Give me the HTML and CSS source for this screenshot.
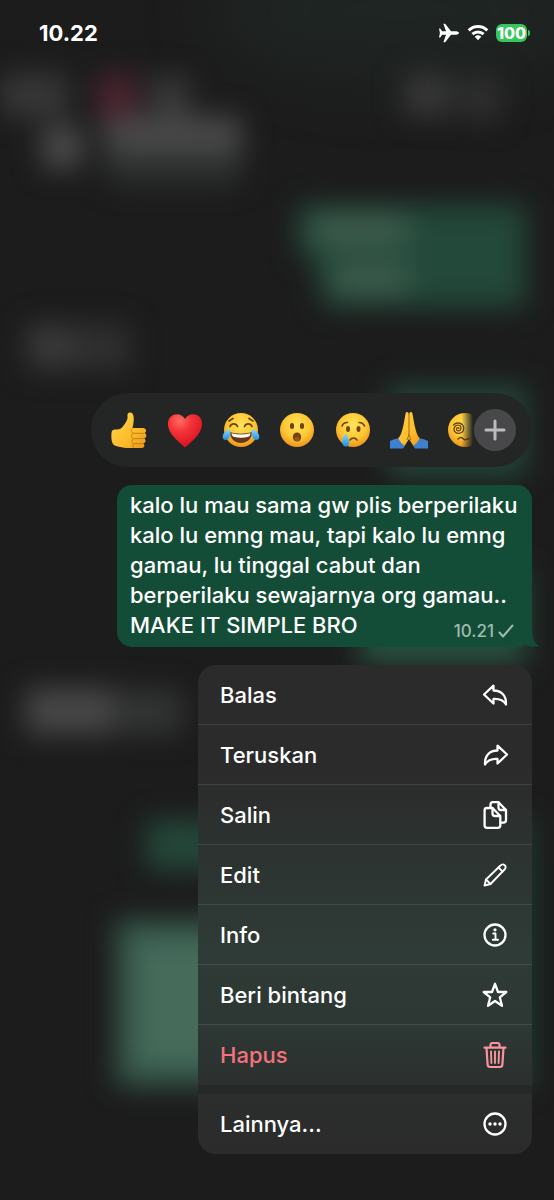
FILE: index.html
```html
<!DOCTYPE html>
<html lang="id">
<head>
    <meta charset="UTF-8">
    <meta name="viewport" content="width=device-width, initial-scale=1.0">
    <title>Chat</title>
    <link rel="stylesheet" href="styles.css">
</head>
<body>

    <!-- Blurred chat behind the menu -->
    <svg class="backdrop" viewBox="0 0 554 1200" preserveAspectRatio="none" aria-hidden="true">
        <defs>
            <filter id="blur" x="-50%" y="-50%" width="200%" height="200%" color-interpolation-filters="sRGB">
                <feGaussianBlur stdDeviation="14"/>
            </filter>
            <filter id="glow" x="-50%" y="-100%" width="200%" height="300%" color-interpolation-filters="sRGB">
                <feGaussianBlur stdDeviation="30"/>
            </filter>
        </defs>
        <rect width="554" height="1200" fill="#1c1c1c"/>
        <ellipse cx="400" cy="10" rx="190" ry="70" fill="#1f2523" filter="url(#glow)"/>
        <g filter="url(#blur)">
            <rect x="0" y="74" width="68" height="42" fill="#383838"/>
            <rect x="98" y="74" width="38" height="48" fill="#4e2330"/>
            <rect x="150" y="76" width="40" height="50" fill="#393939"/>
            <rect x="42" y="126" width="40" height="42" fill="#4c4c4c"/>
            <rect x="104" y="116" width="138" height="40" fill="#494949"/>
            <rect x="108" y="154" width="132" height="30" fill="#2d302f"/>
            <rect x="404" y="74" width="46" height="42" fill="#383838"/>
            <rect x="460" y="76" width="42" height="44" fill="#2f2f2f"/>
            <rect x="26" y="324" width="104" height="46" fill="#303030"/>
            <rect x="30" y="326" width="40" height="38" fill="#3b3b3b"/>
        </g>
        <g filter="url(#blur)">
            <path d="M298 205H526V307H324L314 256H298Z" fill="#23493a"/>
            <rect x="312" y="214" width="96" height="32" fill="#3e5c4d"/>
            <rect x="332" y="264" width="76" height="30" fill="#3e5c4d"/>
            <rect x="388" y="386" width="138" height="90" fill="#24483a"/>
            <rect x="360" y="570" width="166" height="96" fill="#28503f"/>
        </g>
        <g filter="url(#blur)">
            <rect x="26" y="688" width="90" height="46" fill="#484848"/>
            <rect x="112" y="690" width="70" height="44" fill="#333434"/>
            <rect x="146" y="820" width="384" height="50" fill="#24483a"/>
            <rect x="116" y="920" width="412" height="166" fill="#36594b"/>
            <rect x="136" y="940" width="300" height="124" fill="#466b5b"/>
            <rect x="500" y="840" width="34" height="230" fill="#1c382e"/>
        </g>
    </svg>

    <!-- Shared emoji gradients -->
    <svg class="defs" aria-hidden="true">
        <defs>
            <radialGradient id="face" cx="50%" cy="36%" r="66%">
                <stop offset="0" stop-color="#ffe45c"/>
                <stop offset="0.6" stop-color="#fdc732"/>
                <stop offset="1" stop-color="#ee8f1d"/>
            </radialGradient>
            <linearGradient id="skin" x1="0" y1="0" x2="1" y2="1">
                <stop offset="0" stop-color="#ffd54d"/>
                <stop offset="0.6" stop-color="#fdbd2c"/>
                <stop offset="1" stop-color="#e8951b"/>
            </linearGradient>
            <radialGradient id="red" cx="35%" cy="20%" r="80%">
                <stop offset="0" stop-color="#ff6f63"/>
                <stop offset="0.4" stop-color="#f5343a"/>
                <stop offset="1" stop-color="#d9121f"/>
            </radialGradient>
            <linearGradient id="tear" x1="0" y1="0" x2="0" y2="1">
                <stop offset="0" stop-color="#8fdcfb"/>
                <stop offset="1" stop-color="#1f92e0"/>
            </linearGradient>
        </defs>
    </svg>

    <div class="screen">
        <header class="status-bar">
            <time class="clock">10.22</time>
            <div class="status-icons">
                <svg width="22" height="20" viewBox="0 0 22 20" fill="#fff">
                    <path d="M21 10C21 8.800 19 8.200 17 8.200H13L7.600 1.200C7.300 .8 6.900 .7 6.500 .7H5.400L8 8.200H4.200L2.200 5.500H1L1.900 10L1 14.500H2.200L4.200 11.800H8L5.400 19.300H6.500C6.900 19.300 7.300 19.200 7.600 18.800L13 11.800H17C19 11.800 21 11.200 21 10Z"/>
                </svg>
                <svg width="22" height="18" viewBox="0 0 22 18" fill="none" stroke="#fff" stroke-width="3">
                    <path d="M1.700 6.300C7 1.200 15 1.200 20.300 6.300"/>
                    <path d="M5.400 10.200C8.600 7.100 13.400 7.100 16.600 10.200"/>
                    <path d="M11 11.300C12.400 11.300 13.400 11.900 14.200 12.700L11 16.200L7.800 12.700C8.600 11.900 9.600 11.300 11 11.300Z" fill="#fff" stroke="none"/>
                </svg>
                <div class="battery"><span class="battery-level">100</span></div>
            </div>
        </header>

        <main class="focus">
            <div class="reactions">
                <button class="emoji" aria-label="Suka">
                    <svg viewBox="0 0 36 36">
                        <path d="M1 19C0 21 0 29 2 32C4 35 11 35 15 36H31C34 36 34 32 32 31.500C35 31 35.500 27.500 33 26.500C36 26 36 22 33.500 21C36 20 35.500 16 32 16H21.500C22.500 12 23.500 6 22 2.500C20.500-.6 16 0 16.500 3.500C17 8 15 10 13 13C11 16 9 17.500 6 17.500C3 17.500 1.700 17.500 1 19Z" fill="url(#skin)"/>
                        <path d="M22 21.300H33M22 26.600H33M22 31.600H32M21.500 16.500C19.500 18 20 21 22.500 21.300C20 22 20 26 22.500 26.500C20.500 27.500 20.500 31 22.800 31.600C21 32.500 21.500 35 23 35.700" fill="none" stroke="#c97f16" stroke-width="1"/>
                    </svg>
                </button>
                <button class="emoji" aria-label="Cinta">
                    <svg viewBox="0 0 36 36">
                        <path d="M18 7C15 1 6 .5 2.500 6C-1 12 2 19 6 24C10 29 15 32.500 18 35.500C21 32.500 26 29 30 24C34 19 37 12 33.500 6C30 .5 21 1 18 7Z" fill="url(#red)"/>
                    </svg>
                </button>
                <button class="emoji" aria-label="Tertawa">
                    <svg viewBox="0 0 36 36">
                        <circle cx="18" cy="18" r="17" fill="url(#face)"/>
                        <path d="M7 14.500C8.500 11 13 11 14.500 14.500M21.500 14.500C23 11 27.500 11 29 14.500M6 9L10 6.500M30 9L26 6.500" fill="none" stroke="#71430f" stroke-width="1.800" stroke-linecap="round"/>
                        <path d="M7 20C14 22.300 22 22.300 29 20C29 27 24 31 18 31C12 31 7 27 7 20Z" fill="#66391a"/>
                        <path d="M8.500 21.200C15 23 21 23 27.500 21.200C27 24 26 24.500 25.500 24.700C20.500 26 15.500 26 10.500 24.700C9 24 8.700 22.500 8.500 21.200Z" fill="#fff"/>
                        <path d="M7 17C3 18-1 22-.2 26C.6 28.500 4 28.800 6 26C7.500 23.500 7.800 20 7 17ZM29 17C33 18 37 22 36.200 26C35.400 28.500 32 28.800 30 26C28.500 23.500 28.200 20 29 17Z" fill="url(#tear)"/>
                    </svg>
                </button>
                <button class="emoji" aria-label="Kaget">
                    <svg viewBox="0 0 36 36">
                        <circle cx="18" cy="18" r="17" fill="url(#face)"/>
                        <ellipse cx="13" cy="14" rx="2.100" ry="3" fill="#71430f"/>
                        <ellipse cx="23" cy="14" rx="2.100" ry="3" fill="#71430f"/>
                        <ellipse cx="18" cy="25" rx="4.200" ry="4.600" fill="#71430f"/>
                        <ellipse cx="18" cy="27" rx="2.600" ry="2.200" fill="#97571d"/>
                    </svg>
                </button>
                <button class="emoji" aria-label="Sedih">
                    <svg viewBox="0 0 36 36">
                        <circle cx="18" cy="18" r="17" fill="url(#face)"/>
                        <ellipse cx="13" cy="17" rx="2" ry="2.900" fill="#71430f"/>
                        <ellipse cx="23.500" cy="17" rx="2" ry="2.900" fill="#71430f"/>
                        <path d="M7 14C8 11.500 10 10.300 12.500 10.500M24 10.500C26.500 10.500 28.500 11.500 29.500 14M15 28C16.500 25.500 20.500 25.500 22 28" fill="none" stroke="#71430f" stroke-width="1.600" stroke-linecap="round"/>
                        <path d="M11 21C9.500 23.500 7 26.500 7 29.500C7 32.500 8.800 34.500 11 34.500C13.200 34.500 14.500 32.500 14.200 29.500C13.800 26.500 12 24 11 21Z" fill="url(#tear)"/>
                    </svg>
                </button>
                <button class="emoji" aria-label="Doa">
                    <svg viewBox="0 0 36 36">
                        <path d="M17.500 1C16.500-1 14.500 0 14.500 2L12.500 13C11.500 17 11 20 9 24L6 28L12.500 35.500L18 27V3ZM18.500 1C19.500-1 21.500 0 21.500 2L23.500 13C24.500 17 25 20 27 24L30 28L23.500 35.500L18 27V3Z" fill="url(#skin)"/>
                        <path d="M18 2V21C18 24 17 26 16 28M18 21C18 24 19 26 20 28" fill="none" stroke="#b87416" stroke-width="1.200"/>
                        <path d="M-1 29C2 27.500 4.500 26.800 7.500 26.500C9 30 11 32 13.500 33.500L12 36.500H-1ZM37 29C34 27.500 31.500 26.800 28.500 26.500C27 30 25 32 22.500 33.500L24 36.500H37Z" fill="#3f7fcf"/>
                    </svg>
                </button>
                <button class="emoji emoji-faded" aria-label="Pusing">
                    <svg viewBox="0 0 36 36">
                        <circle cx="18" cy="18" r="17" fill="url(#face)"/>
                        <path d="M12 16.500C11.500 15 9.500 15.500 9.500 17C9.500 19.500 13.500 19.500 14 16.500C14.500 13 10 12 8 14.500C5.500 18 8 21.500 12 21.300C16 21 18 17 16 13.500C14 10.500 9 10 6.500 13" fill="none" stroke="#71430f" stroke-width="1.300" stroke-linecap="round"/>
                        <path d="M11 27C13 24.500 15 25.500 16.500 27C18.500 29 20 27 22 26.500" fill="none" stroke="#71430f" stroke-width="1.500" stroke-linecap="round"/>
                    </svg>
                </button>
                <button class="add-reaction" aria-label="Reaksi lainnya">
                    <svg width="22" height="22" viewBox="0 0 22 22" stroke="#bcbcbf" stroke-width="3" stroke-linecap="round">
                        <path d="M11 2V20M2 11H20"/>
                    </svg>
                </button>
            </div>

            <article class="bubble">
                <p class="bubble-text">kalo lu mau sama gw plis berperilaku<br>kalo lu emng mau, tapi kalo lu emng<br>gamau, lu tinggal cabut dan<br>berperilaku sewajarnya org gamau..<br>MAKE IT SIMPLE BRO</p>
                <div class="bubble-meta">
                    <time>10.21</time>
                    <svg width="16" height="14" viewBox="0 0 16 14" fill="none" stroke="#9dbbae" stroke-width="2" stroke-linecap="round" stroke-linejoin="round">
                        <path d="M1.500 8.500L5 12.500L14.500 1.500"/>
                    </svg>
                </div>
                <svg class="bubble-tail" width="20" height="18" viewBox="0 0 20 18" fill="#144d37">
                    <path d="M13 0C13 8 15 14 20 17C14 18.500 8 17.500 4 14L0 6Z"/>
                </svg>
            </article>

            <nav class="menu">
                <button class="menu-item">
                    Balas
                    <svg class="icon" viewBox="0 0 28 28">
                        <path d="M3 13.500L12.500 4.700V9.500C20 9.500 25.500 14 25 23.500C22.500 19.500 19 17.500 12.500 18V22.500Z"/>
                    </svg>
                </button>
                <button class="menu-item">
                    Teruskan
                    <svg class="icon" viewBox="0 0 28 28">
                        <path d="M26 13.500L16.500 4.700V9.500C9 9.500 3.500 14 4 23.500C6.500 19.500 10 17.500 16.500 18V22.500Z"/>
                    </svg>
                </button>
                <button class="menu-item">
                    Salin
                    <svg class="icon" viewBox="0 0 28 28">
                        <path d="M9.500 6.500V3.800C9.500 1.900 10.400 1.200 12 1.200H17.500L25 9V19C25 21 24 21.600 22.500 21.600H19.500"/>
                        <path d="M17.500 1.500V6.500C17.500 8 18.300 9 19.700 9H25"/>
                        <path d="M6 7H11.500L19.300 15V24.500C19.300 26.100 18.400 26.800 16.800 26.800H6C4.400 26.800 3.600 26.100 3.600 24.500V9.300C3.600 7.700 4.400 7 6 7Z"/>
                        <path d="M11.500 7.200V12.500C11.500 14.200 12.300 15 14 15H19"/>
                    </svg>
                </button>
                <button class="menu-item">
                    Edit
                    <svg class="icon icon-thin" viewBox="0 0 28 28">
                        <path d="M3.500 24.500L5 18.500L19.500 4.500C21 3 22.500 3 23.700 4.300C25 5.500 25 7 23.500 8.500L9.500 23Z"/>
                        <path d="M17.500 6.500L21.500 10.500M5 18.500L9.500 23"/>
                    </svg>
                </button>
                <button class="menu-item">
                    Info
                    <svg class="icon" viewBox="0 0 28 28">
                        <circle cx="14" cy="14" r="10.500"/>
                        <path class="thin" d="M12.200 12.500H14.500V18.500M11.800 18.800H17"/>
                        <circle class="dot" cx="14" cy="8.800" r="1.600"/>
                    </svg>
                </button>
                <button class="menu-item">
                    Beri bintang
                    <svg class="icon" viewBox="0 0 28 28">
                        <path d="M14 2.800L17 11H25.300L18.800 16.300L21 24.800L14 20L7 24.800L9.200 16.300L2.700 11H11Z"/>
                    </svg>
                </button>
                <button class="menu-item menu-item-danger">
                    Hapus
                    <svg class="icon" viewBox="0 0 28 28">
                        <path d="M3.500 6.700H24.500M9.500 6.500V4C9.500 2.500 10 2 11.500 2H16.500C18 2 18.500 2.500 18.500 4V6.500M5.500 7L6.600 23.500C6.700 25.200 7.500 26 9 26H19C20.500 26 21.300 25.200 21.400 23.500L22.500 7"/>
                        <path class="thin" d="M10 10.500L10.400 22M14 10.500V22M18 10.500L17.600 22"/>
                    </svg>
                </button>
                <button class="menu-item menu-item-more">
                    Lainnya...
                    <svg class="icon" viewBox="0 0 28 28">
                        <circle cx="14" cy="14" r="10.500"/>
                        <circle class="dot" cx="9" cy="14" r="1.700"/>
                        <circle class="dot" cx="14" cy="14" r="1.700"/>
                        <circle class="dot" cx="19" cy="14" r="1.700"/>
                    </svg>
                </button>
            </nav>
        </main>
    </div>

</body>
</html>
```
FILE: styles.css
```css
* {
    margin: 0;
    padding: 0;
    box-sizing: border-box;
}

body {
    font-family: Inter, "Liberation Sans", sans-serif;
    background: #1c1c1c;
    color: #fff;
}

button {
    border: none;
    background: none;
    color: inherit;
    font: inherit;
    cursor: pointer;
}

svg {
    display: block;
}

.defs {
    position: absolute;
    width: 0;
    height: 0;
}

/* Blurred chat, lies under everything */
.backdrop {
    position: absolute;
    top: 0;
    left: 0;
    width: 100%;
    height: 100%;
    z-index: -1;
}

.screen {
    min-height: 100vh;
    display: flex;
    flex-direction: column;
}

/* Status bar */
.status-bar {
    display: flex;
    justify-content: space-between;
    align-items: center;
    height: 66px;
    padding: 0 24px 0 39px;
}

.clock {
    font-size: 22px;
    font-weight: 700;
}

.status-icons {
    display: flex;
    align-items: center;
    gap: 7px;
}

.battery {
    display: flex;
    align-items: center;
    gap: 1px;
}

.battery::after {
    content: "";
    width: 2px;
    height: 6px;
    border-radius: 0 2px 2px 0;
    background: #34c759;
}

.battery-level {
    width: 31px;
    border-radius: 6px;
    background: #34c759;
    font-size: 16px;
    font-weight: 800;
    line-height: 18px;
    text-align: center;
}

/* Focused message */
.focus {
    flex: 1;
    display: flex;
    flex-direction: column;
    justify-content: flex-end;
    align-items: flex-end;
    gap: 18px;
    padding: 0 22px 46px;
}

.reactions {
    position: relative;
    display: flex;
    align-items: center;
    gap: 20px;
    width: 441px;
    max-width: 100%;
    height: 74px;
    padding-left: 20px;
    border-radius: 37px;
    background: #242626;
    overflow: hidden;
}

.emoji {
    flex: none;
    width: 36px;
    height: 36px;
}

.emoji svg {
    width: 36px;
    height: 36px;
    overflow: visible;
}

.emoji-faded {
    mask-image: linear-gradient(to right, #000 40%, transparent 72%);
}

.add-reaction {
    position: absolute;
    top: 16px;
    right: 16px;
    display: flex;
    justify-content: center;
    align-items: center;
    width: 42px;
    height: 42px;
    border-radius: 50%;
    background: #48484a;
}

.bubble {
    position: relative;
    width: 415px;
    max-width: 100%;
    padding: 5px 13px 7px;
    border-radius: 15px;
    background: #144d37;
}

.bubble-text {
    font-size: 22px;
    font-weight: 500;
    line-height: 30px;
}

.bubble-meta {
    position: absolute;
    right: 18px;
    bottom: 6px;
    display: flex;
    align-items: center;
    gap: 4px;
    color: #9dbbae;
    font-size: 17px;
    font-weight: 500;
    line-height: 20px;
}

.bubble-tail {
    position: absolute;
    right: -7px;
    bottom: 0;
}

/* Context menu */
.menu {
    width: 334px;
    max-width: 100%;
    border-radius: 18px;
    overflow: hidden;
    background: linear-gradient(#2b2b2b 22%, #2c3330 38%, #2f3b36 58%, #2d3733 75%, #2b2d2c 90%, #2b2b2b);
}

.menu-item {
    display: flex;
    justify-content: space-between;
    align-items: center;
    width: 100%;
    height: 60px;
    padding: 0 23px 0 22px;
    border-bottom: 1px solid rgba(255, 255, 255, 0.1);
    font-size: 22px;
    font-weight: 500;
}

.menu-item-danger {
    color: #f4717f;
    border-bottom: none;
}

.menu-item-more {
    height: 69px;
    border-top: 9px solid #242827;
    border-bottom: none;
}

.icon {
    width: 28px;
    height: 28px;
    fill: none;
    stroke: currentColor;
    stroke-width: 2.3;
    stroke-linecap: round;
    stroke-linejoin: round;
}

.icon-thin,
.icon .thin {
    stroke-width: 1.9;
}

.icon .dot {
    fill: currentColor;
    stroke: none;
}

.menu-item-danger .icon {
    color: #f9949f;
    stroke-width: 2.2;
}
```
